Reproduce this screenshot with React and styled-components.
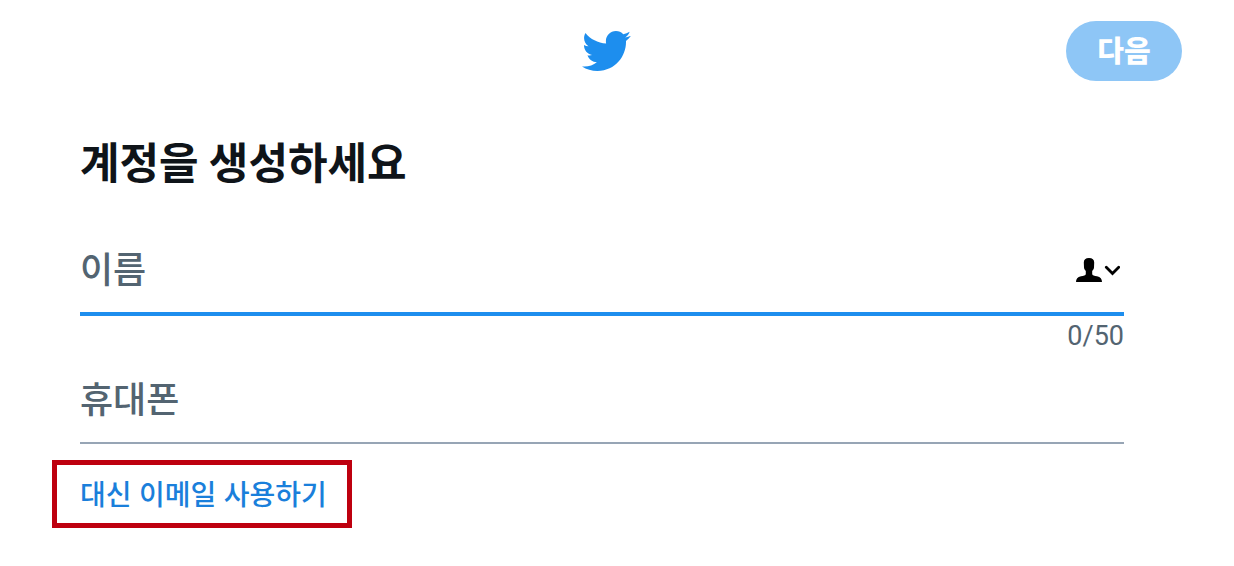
import React, { useState } from "react";
import styled, { createGlobalStyle } from "styled-components";

const GlobalStyle = createGlobalStyle`
  * {
    box-sizing: border-box;
  }

  body {
    margin: 0;
    background-color: #fff;
    font-family: Inter, "Noto Sans CJK KR", sans-serif;
  }
`;

const Container = styled.div`
  padding: 0 21px 38px 0;
`;

const Header = styled.header`
  display: grid;
  grid-template-columns: 1fr auto 1fr;
  align-items: center;
  padding: 21px 0;
`;

const Logo = styled.svg`
  grid-column: 2;
  width: 49px;
  height: 40px;
  fill: #1d8eee;
`;

const NextButton = styled.button`
  justify-self: end;
  margin-right: 31px;
  width: 116px;
  height: 60px;
  padding: 2px 0 0;
  border: none;
  border-radius: 30px;
  background-color: #8ec6f6;
  color: #fff;
  font-family: inherit;
  font-size: 29px;
  font-weight: 900;
  line-height: 58px;
`;

const Form = styled.form`
  padding: 0 89px 0 80px;
`;

const Title = styled.h1`
  margin: 0;
  padding: 29px 0 33px;
  color: #0f1419;
  font-size: 43px;
  font-weight: bold;
  line-height: 64px;
`;

const Field = styled.div`
  display: flex;
  align-items: center;
  height: ${({ $active }) => ($active ? "88px" : "86px")};
  border-bottom: ${({ $active }) => ($active ? "4px solid #1d8eee" : "2px solid #97a5b5")};
`;

const Label = styled.label`
  color: #536471;
  font-size: 36px;
  font-weight: 500;
  line-height: 52px;
`;

const Input = styled.input`
  flex: 1;
  min-width: 0;
  height: 52px;
  padding: 0 12px;
  border: none;
  outline: none;
  background: transparent;
  color: #0f1419;
  font-family: inherit;
  font-size: 36px;
`;

const ContactButton = styled.button`
  display: flex;
  margin-right: 4px;
  padding: 0;
  border: none;
  background: none;
`;

const Counter = styled.div`
  margin-bottom: 2px;
  color: #536471;
  font-family: Roboto, sans-serif;
  font-size: 27px;
  line-height: 40px;
  text-align: right;
`;

const LinkBox = styled.div`
  width: fit-content;
  margin: 16px 0 0 -28px;
  padding: 9px 20px 7px 23px;
  border: 5px solid #be000f;
`;

const EmailLink = styled.a`
  display: block;
  color: #1a7fdb;
  font-size: 28px;
  font-weight: 500;
  line-height: 42px;
  text-decoration: none;
`;

const App = () => {
  const [name, setName] = useState("");
  const [phone, setPhone] = useState("");

  return (
    <Container>
      <GlobalStyle />
      <Header>
        <Logo viewBox="0.93 2.74 22.72 18.46" aria-label="Twitter">
          <path d="M23.643 4.937c-.835.37-1.732.62-2.675.733.962-.576 1.7-1.49 2.048-2.578-.9.534-1.897.922-2.958 1.13-.85-.904-2.06-1.47-3.4-1.47-2.572 0-4.658 2.086-4.658 4.66 0 .364.042.718.12 1.06-3.873-.195-7.304-2.05-9.602-4.868-.4.69-.63 1.49-.63 2.342 0 1.616.823 3.043 2.072 3.878-.764-.025-1.482-.234-2.11-.583v.06c0 2.257 1.605 4.14 3.737 4.568-.392.106-.803.162-1.227.162-.3 0-.593-.028-.877-.082.593 1.85 2.313 3.198 4.352 3.234-1.595 1.25-3.604 1.995-5.786 1.995-.376 0-.747-.022-1.112-.065 2.062 1.323 4.51 2.093 7.14 2.093 8.57 0 13.255-7.098 13.255-13.254 0-.2-.005-.402-.014-.602.91-.658 1.7-1.477 2.323-2.41z" />
        </Logo>
        <NextButton type="submit" form="signup" disabled={!name || !phone}>
          다음
        </NextButton>
      </Header>

      <Form id="signup" autoComplete="off" onSubmit={(e) => e.preventDefault()}>
        <Title>계정을 생성하세요</Title>

        <Field $active>
          <Label htmlFor="name">이름</Label>
          <Input
            type="text"
            id="name"
            maxLength={50}
            value={name}
            onChange={(e) => setName(e.target.value)}
          />
          <ContactButton type="button" aria-label="연락처">
            <svg width="44" height="24" viewBox="0 0 44 24">
              <path d="M13 0C16.5 0 18.2 1.6 18.2 4.5L18 9.5C17.8 11.2 17 12.2 16.2 13V16C16.2 17.6 18.5 17.7 21 18.3C24.5 19.2 26 21 26 24H0C0 21 1.5 19.2 5 18.3C7.5 17.7 9.8 17.6 9.8 16V13C9 12.2 8.2 11.2 8 9.5L7.8 4.5C7.8 1.6 9.5 0 13 0Z" />
              <path
                d="M30.3 9.2L36.5 15.4L42.7 9.2"
                fill="none"
                stroke="#000"
                strokeWidth="2.8"
                strokeLinecap="round"
              />
            </svg>
          </ContactButton>
        </Field>
        <Counter>{name.length}/50</Counter>

        <Field>
          <Label htmlFor="phone">휴대폰</Label>
          <Input
            type="tel"
            id="phone"
            value={phone}
            onChange={(e) => setPhone(e.target.value)}
          />
        </Field>

        <LinkBox>
          <EmailLink href="#email">대신 이메일 사용하기</EmailLink>
        </LinkBox>
      </Form>
    </Container>
  );
};

export default App;
